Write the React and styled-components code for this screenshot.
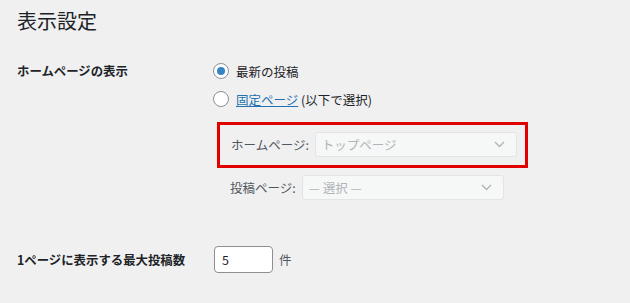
import React from 'react';
import styled, { createGlobalStyle } from 'styled-components';

const GlobalStyle = createGlobalStyle`
  html, body {
    margin: 0;
    background: #f0f0f1;
  }
  body {
    font-family: "Noto Sans CJK JP", "Noto Sans", sans-serif;
    color: #1d2327;
    font-size: 12.5px;
  }
`;

const Page = styled.div`
  padding: 6px 0 0 17px;
  width: 613px;
  height: 297px;
  box-sizing: border-box;
`;

const Title = styled.h1`
  margin: 0;
  font-size: 20px;
  font-weight: 400;
  line-height: 30px;
  color: #1d2327;
`;

const FormTable = styled.div`
  display: grid;
  grid-template-columns: 197px 1fr;
  margin-top: 21px;
`;

const Label = styled.div`
  font-weight: 700;
  font-size: 12.4px;
  line-height: 20px;
  white-space: nowrap;
  padding-top: ${(p) => p.top}px;
`;

const Field = styled.div`
  display: flex;
  flex-direction: column;
  padding-bottom: ${(p) => p.bottom || 0}px;
`;

const RadioRow = styled.label`
  display: flex;
  align-items: center;
  gap: 7px;
  height: 28px;
`;

const Radio = styled.span`
  width: 14px;
  height: 14px;
  border: 1px solid #8c8f94;
  border-radius: 50%;
  background: #fff;
  display: flex;
  align-items: center;
  justify-content: center;
  margin-left: -1px;

  &::after {
    content: '';
    display: ${(p) => (p.checked ? 'block' : 'none')};
    width: 8px;
    height: 8px;
    border-radius: 50%;
    background: #3582c4;
  }
`;

const Link = styled.a`
  color: #2271b1;
  text-decoration: underline;
`;

const Highlight = styled.div`
  margin: 9px 0 0 3px;
  width: 311px;
  box-sizing: border-box;
  border: 3px solid #e00000;
  padding: 7px 10px 8px 11px;
`;

const SelectRow = styled.div`
  display: flex;
  align-items: center;
  gap: 6px;
  white-space: nowrap;
  margin-top: ${(p) => p.top || 0}px;
  padding-left: ${(p) => p.indent || 0}px;
  color: #50575e;
`;

const Select = styled.div`
  flex: none;
  width: ${(p) => p.w}px;
  height: 25px;
  box-sizing: border-box;
  border: 1px solid #e2e4e7;
  border-radius: 3px;
  background: #f6f7f7;
  color: #b0b4b8;
  display: flex;
  align-items: center;
  justify-content: space-between;
  padding: 0 11px 0 6px;
`;

const NumberRow = styled.div`
  display: flex;
  align-items: center;
  gap: 6px;
`;

const NumberInput = styled.div`
  width: 59px;
  height: 27px;
  box-sizing: border-box;
  border: 1px solid #8c8f94;
  border-radius: 4px;
  background: #fff;
  padding-left: 7px;
  display: flex;
  align-items: center;
`;

const Unit = styled.span`
  color: #50575e;
`;

const Chevron = () => (
  <svg width="11" height="7" viewBox="0 0 11 7">
    <path d="M1 1l4.5 4.5L10 1" fill="none" stroke="#b0b4b8" strokeWidth="1.4" />
  </svg>
);

export default function App() {
  return (
    <Page>
      <GlobalStyle />
      <Title>表示設定</Title>
      <FormTable>
        <Label top={4}>ホームページの表示</Label>
        <Field bottom={46}>
          <RadioRow>
            <Radio checked />
            最新の投稿
          </RadioRow>
          <RadioRow>
            <Radio />
            <span>
              <Link>固定ページ</Link> (以下で選択)
            </span>
          </RadioRow>
          <Highlight>
            <SelectRow>
              ホームページ:
              <Select w={202}>
                トップページ
                <Chevron />
              </Select>
            </SelectRow>
          </Highlight>
          <SelectRow top={7} indent={16}>
            投稿ページ:
            <Select w={202}>
              — 選択 —
              <Chevron />
            </Select>
          </SelectRow>
        </Field>
        <Label top={4}>1ページに表示する最大投稿数</Label>
        <NumberRow>
          <NumberInput>5</NumberInput>
          <Unit>件</Unit>
        </NumberRow>
      </FormTable>
    </Page>
  );
}
